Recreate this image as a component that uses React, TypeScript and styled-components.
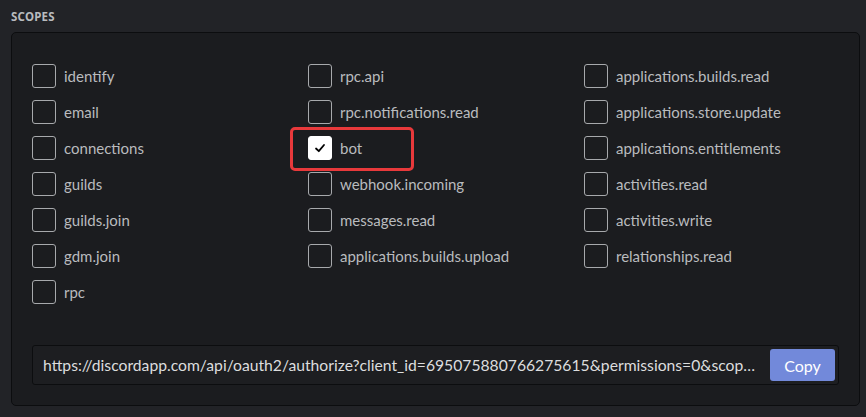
import React from "react";
import styled, { createGlobalStyle } from "styled-components";

const Global = createGlobalStyle`
  html, body { margin: 0; padding: 0; background: #222327; }
  body { font-family: "Lato", "Noto Sans", sans-serif; }
`;

const Page = styled.div`
  width: 866px;
  height: 417px;
  box-sizing: border-box;
  padding: 9px 6px 0 11px;
  background: #222327;
`;

const Title = styled.h5`
  margin: 0 0 8px 0;
  height: 15px;
  font-family: "Noto Sans", sans-serif;
  font-size: 11.5px;
  font-weight: 700;
  line-height: 15px;
  letter-spacing: 0.2px;
  color: #b9bbbe;
  text-transform: uppercase;
`;

const Panel = styled.div`
  box-sizing: border-box;
  width: 849px;
  height: 374px;
  background: #1b1c1f;
  border: 1px solid #0c0d0f;
  border-radius: 5px;
  padding: 24px 20px 0 20px;
  display: flex;
  flex-direction: column;
`;

const Grid = styled.div`
  display: grid;
  grid-template-columns: 276px 276px 1fr;
  grid-auto-flow: column;
  grid-template-rows: repeat(7, 36px);
  height: 252px;
`;

const Item = styled.label`
  position: relative;
  display: flex;
  align-items: center;
  gap: 8px;
  height: 36px;
  padding-top: 1px;
  box-sizing: border-box;
`;

const Highlight = styled.span`
  position: absolute;
  left: -18px;
  top: -2px;
  width: 118px;
  height: 38px;
  border: 3px solid #e8393b;
  border-radius: 5px;
`;

const Box = styled.span<{ $checked?: boolean }>`
  box-sizing: border-box;
  width: 24px;
  height: 24px;
  flex: none;
  border-radius: 3px;
  border: 1px solid ${(p) => (p.$checked ? "#ffffff" : "#a7a9ac")};
  background: ${(p) => (p.$checked ? "#ffffff" : "transparent")};
  display: flex;
  align-items: center;
  justify-content: center;
`;

const Label = styled.span`
  font-family: "Lato", "Noto Sans", sans-serif;
  font-size: 15px;
  color: #b9bbbe;
  white-space: nowrap;
`;

const UrlBar = styled.div`
  box-sizing: border-box;
  margin-top: 36px;
  width: 807px;
  height: 40px;
  background: #1d1e21;
  border: 1px solid #0c0d0f;
  border-radius: 3px;
  display: flex;
  align-items: center;
  gap: 12px;
  padding: 0 3px 0 10px;
`;

const Url = styled.div`
  flex: 1;
  min-width: 0;
  font-family: "Lato", "Noto Sans", sans-serif;
  font-size: 15.7px;
  color: #dcddde;
  white-space: nowrap;
  overflow: hidden;
  text-overflow: ellipsis;
`;

const CopyButton = styled.button`
  width: 65px;
  height: 32px;
  flex: none;
  border: none;
  border-radius: 3px;
  background: #7289da;
  color: #ffffff;
  font-family: "Lato", "Noto Sans", sans-serif;
  font-size: 16px;
  cursor: pointer;
`;

const scopes: [string, boolean][] = [
  ["identify", false],
  ["email", false],
  ["connections", false],
  ["guilds", false],
  ["guilds.join", false],
  ["gdm.join", false],
  ["rpc", false],
  ["rpc.api", false],
  ["rpc.notifications.read", false],
  ["bot", true],
  ["webhook.incoming", false],
  ["messages.read", false],
  ["applications.builds.upload", false],
  ["", false],
  ["applications.builds.read", false],
  ["applications.store.update", false],
  ["applications.entitlements", false],
  ["activities.read", false],
  ["activities.write", false],
  ["relationships.read", false],
];

const Check = () => (
  <svg width="14" height="14" viewBox="0 0 14 14" fill="none">
    <path d="M3 7.5 L5.8 10.2 L11 4" stroke="#000" strokeWidth="1.8" strokeLinecap="round" strokeLinejoin="round" />
  </svg>
);

export default function App() {
  return (
    <>
      <Global />
      <Page>
        <Title>Scopes</Title>
        <Panel>
          <Grid>
            {scopes.map(([name, checked], i) =>
              name ? (
                <Item key={i}>
                  {checked && <Highlight />}
                  <Box $checked={checked}>{checked && <Check />}</Box>
                  <Label>{name}</Label>
                </Item>
              ) : (
                <span key={i} />
              )
            )}
          </Grid>
          <UrlBar>
            <Url>https://discordapp.com/api/oauth2/authorize?client_id=695075880766275615&amp;permissions=0&amp;scope=bot</Url>
            <CopyButton>Copy</CopyButton>
          </UrlBar>
        </Panel>
      </Page>
    </>
  );
}
